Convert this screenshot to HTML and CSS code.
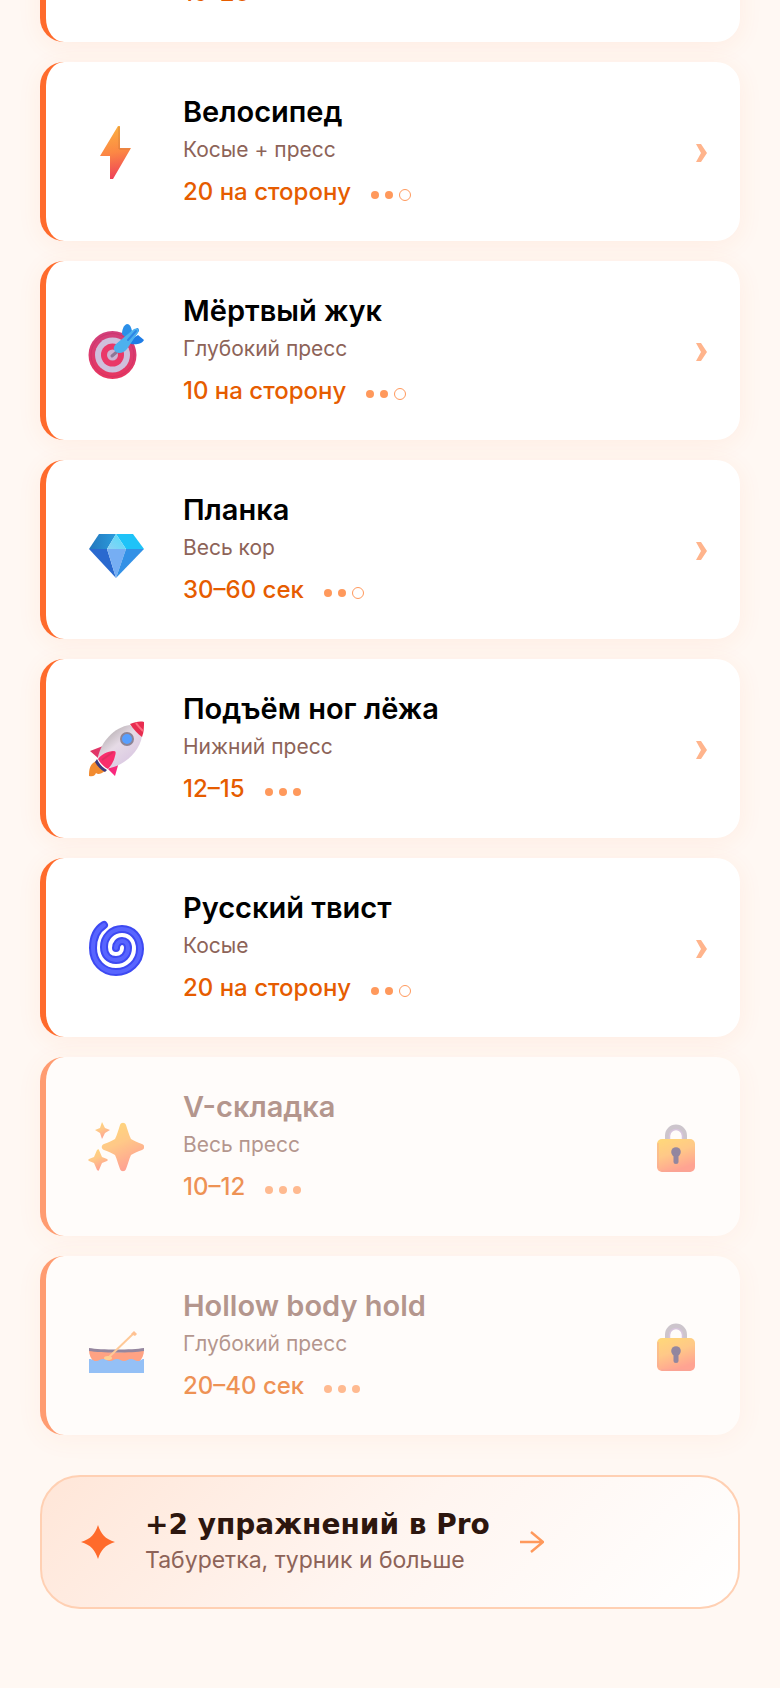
FILE: index.html
```html
<!DOCTYPE html>
<html lang="ru">
<head>
    <meta charset="UTF-8">
    <meta name="viewport" content="width=device-width, initial-scale=1.0">
    <title>Упражнения на пресс</title>
    <link rel="stylesheet" href="styles.css">
</head>
<body>
    <!-- Shared symbols -->
    <svg class="symbols" aria-hidden="true">
        <defs>
            <linearGradient id="gold" x1="0" y1="0" x2="0.4" y2="1">
                <stop offset="0" stop-color="#ffc938"/>
                <stop offset="0.5" stop-color="#ffb04f"/>
                <stop offset="1" stop-color="#ff765f"/>
            </linearGradient>
            <symbol id="chevron" viewBox="0 0 12 20">
                <path d="M0 2h5l6 9-6 9H0l5-9z" fill="#ffb48c"/>
            </symbol>
            <symbol id="lock" viewBox="0 0 64 52">
                <path d="M23.500 20v-5.500a8.500 8.500 0 0 1 17 0V20" fill="none" stroke="#b3abb8" stroke-width="5"/>
                <path d="M25.500 20v-5a6.500 6.500 0 0 1 13 0v5" fill="none" stroke="#c3a9d0" stroke-width="1.500"/>
                <rect x="13" y="18" width="38" height="33" rx="5" fill="url(#gold)"/>
                <path d="M14 22v25M17 50h30" stroke="#f0786a" stroke-width="1" opacity="0.700"/>
                <circle cx="32" cy="31" r="4.800" fill="#5a4a73"/>
                <rect x="29.500" y="31" width="5" height="12" rx="2.500" fill="#5a4a73"/>
            </symbol>
        </defs>
    </svg>

    <main class="page">
        <ul class="exercise-list">
            <li>
                <button class="exercise" type="button">
                    <span class="exercise-icon"></span>
                    <span class="exercise-text">
                        <span class="exercise-meta">15–20</span>
                    </span>
                </button>
            </li>
            <li>
                <button class="exercise" type="button">
                    <span class="exercise-icon">
                        <svg viewBox="0 0 56 56" aria-hidden="true">
                            <linearGradient id="bolt" x1="0.400" y1="0" x2="0.500" y2="1">
                                <stop offset="0" stop-color="#fbb041"/>
                                <stop offset="0.500" stop-color="#fc8744"/>
                                <stop offset="1" stop-color="#ee3f59"/>
                            </linearGradient>
                            <path d="M30 2h2v22h11L25 55h-3V32H12z" fill="url(#bolt)"/>
                            <path d="M31 3v22h11" fill="none" stroke="#c97a3d" stroke-width="1" opacity="0.600"/>
                        </svg>
                    </span>
                    <span class="exercise-text">
                        <span class="exercise-name">Велосипед</span>
                        <span class="exercise-target">Косые + пресс</span>
                        <span class="exercise-meta">20 на сторону <span class="level"><i class="dot"></i><i class="dot"></i><i class="dot empty"></i></span></span>
                    </span>
                    <svg class="chevron" aria-hidden="true"><use href="#chevron"/></svg>
                </button>
            </li>
            <li>
                <button class="exercise" type="button">
                    <span class="exercise-icon">
                        <svg viewBox="0 0 56 56" aria-hidden="true">
                            <linearGradient id="board" x1="0" y1="0" x2="0" y2="1">
                                <stop offset="0" stop-color="#d1417d"/>
                                <stop offset="1" stop-color="#e8365f"/>
                            </linearGradient>
                            <circle cx="24.500" cy="32" r="24" fill="url(#board)"/>
                            <circle cx="24.500" cy="32" r="21.500" fill="none" stroke="#c92f66" stroke-width="1" opacity="0.600"/>
                            <circle cx="24.500" cy="32" r="17.500" fill="#cfbfdc"/>
                            <circle cx="24.500" cy="32" r="11.500" fill="#ea3868"/>
                            <circle cx="24.500" cy="32" r="5.500" fill="#cbb4d2"/>
                            <path d="M24 33l7-6" stroke="#8d7796" stroke-width="3" stroke-linecap="round"/>
                            <path d="M34 11c0-5 2-9 5-10 3 0 4 3 5 7l-5 8z" fill="#2b8fe8"/>
                            <path d="M41 18l9-6 6 5c-2 4-8 5-13 4z" fill="#1f7de6"/>
                            <path d="M44 9l5-4c2 0 2 2 2 3l-4 6z" fill="#2f8fe8"/>
                            <path d="M28 21L46 6c4-2 6 2 3 5L39 26c-3 4-8 5-11 3s-3-5 0-8z" fill="#4db1ee"/>
                            <path d="M40 17l8-9" stroke="#2f86e6" stroke-width="2" stroke-linecap="round"/>
                        </svg>
                    </span>
                    <span class="exercise-text">
                        <span class="exercise-name">Мёртвый жук</span>
                        <span class="exercise-target">Глубокий пресс</span>
                        <span class="exercise-meta">10 на сторону <span class="level"><i class="dot"></i><i class="dot"></i><i class="dot empty"></i></span></span>
                    </span>
                    <svg class="chevron" aria-hidden="true"><use href="#chevron"/></svg>
                </button>
            </li>
            <li>
                <button class="exercise" type="button">
                    <span class="exercise-icon">
                        <svg viewBox="0 0 56 56" aria-hidden="true">
                            <linearGradient id="gem-left" x1="0" y1="0" x2="1" y2="0">
                                <stop offset="0" stop-color="#2377bd"/>
                                <stop offset="1" stop-color="#2b9bdc"/>
                            </linearGradient>
                            <linearGradient id="gem-mid" x1="0" y1="1" x2="1" y2="0">
                                <stop offset="0" stop-color="#8cd2f5"/>
                                <stop offset="1" stop-color="#4fdcf8"/>
                            </linearGradient>
                            <path d="M1 27L11 12h17l-9 15z" fill="url(#gem-left)"/>
                            <path d="M28 12h17l11 15H38z" fill="#1fc3f8"/>
                            <path d="M28 12l10 15H19z" fill="url(#gem-mid)"/>
                            <path d="M1 27h18l9 29z" fill="#2a69cf"/>
                            <path d="M19 27h19L28 56z" fill="#76aef3"/>
                            <path d="M38 27h18L28 56z" fill="#3391e6"/>
                        </svg>
                    </span>
                    <span class="exercise-text">
                        <span class="exercise-name">Планка</span>
                        <span class="exercise-target">Весь кор</span>
                        <span class="exercise-meta">30–60 сек <span class="level"><i class="dot"></i><i class="dot"></i><i class="dot empty"></i></span></span>
                    </span>
                    <svg class="chevron" aria-hidden="true"><use href="#chevron"/></svg>
                </button>
            </li>
            <li>
                <button class="exercise" type="button">
                    <span class="exercise-icon">
                        <svg viewBox="0 0 56 56" aria-hidden="true">
                            <linearGradient id="hull" x1="0.200" y1="0.200" x2="0.700" y2="0.800">
                                <stop offset="0" stop-color="#bdb5b9"/>
                                <stop offset="0.450" stop-color="#e6dbe6"/>
                                <stop offset="1" stop-color="#dccbe3"/>
                            </linearGradient>
                            <linearGradient id="fin" x1="0" y1="0" x2="1" y2="1">
                                <stop offset="0" stop-color="#d93a62"/>
                                <stop offset="1" stop-color="#ff2482"/>
                            </linearGradient>
                            <path d="M8 40c-6 3-7 8-7 15 5 1 6-1 7-3 2 2 5 1 9-2z" fill="#f28b30"/>
                            <path d="M15 25L2 30l8 7zM31 41l-4 14-7-7z" fill="url(#fin)"/>
                            <path d="M10 36C13 21 26 6 42 4l12 11c-2 15-17 29-32 32z" fill="url(#hull)"/>
                            <path d="M42 3c5-2 10-3 14-2 0 5 0 10-2 15-4-3-9-8-12-13z" fill="#e82d50"/>
                            <path d="M48 2c2 3 5 6 7 8" stroke="#ff6b80" stroke-width="2" fill="none"/>
                            <path d="M9 38c2 5 6 9 10 11l-2 2C13 49 9 45 7 41z" fill="#3d3a7d"/>
                            <path d="M10 38c3-4 9-8 16-8 2 0 2 2 1 5-1 5-4 10-7 13-4-2-8-6-10-10z" fill="#f92d6c"/>
                            <path d="M14 39l11-8" stroke="#c73258" stroke-width="2" opacity="0.500"/>
                            <circle cx="39" cy="18" r="6" fill="#579fff" stroke="#8d8495" stroke-width="2"/>
                        </svg>
                    </span>
                    <span class="exercise-text">
                        <span class="exercise-name">Подъём ног лёжа</span>
                        <span class="exercise-target">Нижний пресс</span>
                        <span class="exercise-meta">12–15 <span class="level"><i class="dot"></i><i class="dot"></i><i class="dot"></i></span></span>
                    </span>
                    <svg class="chevron" aria-hidden="true"><use href="#chevron"/></svg>
                </button>
            </li>
            <li>
                <button class="exercise" type="button">
                    <span class="exercise-icon">
                        <svg viewBox="0 0 56 56" aria-hidden="true">
                            <g fill="none" stroke-linecap="round">
                                <path d="M16 5C8 10 5 18 5 28c0 14 10 24 23 24s24-10 24-23c0-12-8-20-18-20s-18 8-18 18c0 8 5 13 12 13s12-5 12-12c0-5-3-7-6-7s-6 3-6 7" stroke="#3d49f2" stroke-width="8"/>
                                <path d="M16 5C8 10 5 18 5 28c0 14 10 24 23 24s24-10 24-23c0-12-8-20-18-20s-18 8-18 18c0 8 5 13 12 13s12-5 12-12c0-5-3-7-6-7s-6 3-6 7" stroke="#5865ff" stroke-width="4"/>
                            </g>
                        </svg>
                    </span>
                    <span class="exercise-text">
                        <span class="exercise-name">Русский твист</span>
                        <span class="exercise-target">Косые</span>
                        <span class="exercise-meta">20 на сторону <span class="level"><i class="dot"></i><i class="dot"></i><i class="dot empty"></i></span></span>
                    </span>
                    <svg class="chevron" aria-hidden="true"><use href="#chevron"/></svg>
                </button>
            </li>
            <li>
                <button class="exercise locked" type="button">
                    <span class="exercise-icon">
                        <svg viewBox="0 0 56 56" aria-hidden="true">
                            <g fill="url(#gold)">
                                <path d="M32 6c1-3 5-3 6 0 2 6 3 10 5 14 3 2 6 3 11 5 3 1 3 5 0 6-5 2-8 3-11 5-2 4-3 9-5 14-1 3-5 3-6 0-2-5-3-10-5-14-3-2-6-3-11-5-3-1-3-5 0-6 5-2 8-3 11-5 2-4 3-8 5-14z"/>
                                <path d="M14 3l3 6 5 2-5 3-3 6-2-6-5-3 5-2z"/>
                                <path d="M9 31c1-1 2-1 2 0l3 7 5 2c1 1 1 1 0 2l-5 2-3 7c0 1-1 1-2 0l-3-7-5-2c-1-1-1-1 0-2l5-2z"/>
                            </g>
                        </svg>
                    </span>
                    <span class="exercise-text">
                        <span class="exercise-name">V-складка</span>
                        <span class="exercise-target">Весь пресс</span>
                        <span class="exercise-meta">10–12 <span class="level"><i class="dot"></i><i class="dot"></i><i class="dot"></i></span></span>
                    </span>
                    <svg class="lock" aria-hidden="true"><use href="#lock"/></svg>
                </button>
            </li>
            <li>
                <button class="exercise locked" type="button">
                    <span class="exercise-icon">
                        <svg viewBox="0 0 56 56" aria-hidden="true">
                            <path d="M1 32c8 3 47 3 55 0 0 5-2 9-5 12H6c-3-3-5-7-5-12z" fill="#ff7548"/>
                            <path d="M1 30c12 2 43 2 55 0v3c-12 2-43 2-55 0z" fill="#5d4a72"/>
                            <path d="M1 41c4 0 4 2 7 2s4-2 7-2 4 2 7 2 4-2 7-2 4 2 7 2 4-2 7-2 4 2 7 2 3-2 6-2v14H1z" fill="#5ba3f8"/>
                            <path d="M20 40l26-25" stroke="#ffb067" stroke-width="2"/>
                            <path d="M43 16l3-3 3 3-2 2z" fill="#ffa45f"/>
                            <ellipse cx="20" cy="40" rx="4" ry="2" fill="#ffbb60"/>
                        </svg>
                    </span>
                    <span class="exercise-text">
                        <span class="exercise-name">Hollow body hold</span>
                        <span class="exercise-target">Глубокий пресс</span>
                        <span class="exercise-meta">20–40 сек <span class="level"><i class="dot"></i><i class="dot"></i><i class="dot"></i></span></span>
                    </span>
                    <svg class="lock" aria-hidden="true"><use href="#lock"/></svg>
                </button>
            </li>
        </ul>

        <button class="pro-banner" type="button">
            <svg class="pro-star" viewBox="0 0 34 34" aria-hidden="true">
                <path d="M17 0c3 9 7 14 17 17-10 3-14 8-17 17C14 25 10 20 0 17 10 14 14 9 17 0z" fill="#ff6b2c"/>
            </svg>
            <span class="pro-text">
                <span class="pro-title">+2 упражнений в Pro</span>
                <span class="pro-subtitle">Табуретка, турник и больше</span>
            </span>
            <svg class="pro-arrow" viewBox="0 0 24 22" aria-hidden="true">
                <path d="M0 11h23M11 1l12 10-12 10" fill="none" stroke="#ff995c" stroke-width="2.400"/>
            </svg>
        </button>
    </main>
</body>
</html>
```
FILE: styles.css
```css
* {
    box-sizing: border-box;
}

body {
    margin: 0;
    background-color: #fff8f3;
    font-family: Inter, 'Noto Sans', sans-serif;
    overflow-x: hidden;
}

button {
    width: 100%;
    font-family: inherit;
    text-align: left;
    cursor: pointer;
}

.symbols {
    display: block;
    width: 0;
    height: 0;
}

.page {
    padding: 0 40px 60px;
    overflow: hidden;
}

/* The list is scrolled so that the first card is almost out of view */
.exercise-list {
    display: flex;
    flex-direction: column;
    gap: 20px;
    list-style: none;
    margin: -66px 0 40px;
    padding: 0;
}

.exercise {
    display: flex;
    align-items: center;
    gap: 29px;
    padding: 32px;
    background-color: white;
    border: none;
    border-left: 6px solid #ff6b2c;
    border-radius: 24px;
    box-shadow: 0 4px 24px rgba(255, 107, 44, 0.08);
}

.exercise-icon {
    display: flex;
    justify-content: center;
    width: 76px;
}

.exercise-icon svg {
    width: 56px;
    height: 56px;
}

.exercise-text {
    display: flex;
    flex: 1;
    flex-direction: column;
}

.exercise-name {
    font-size: 29px;
    font-weight: 600;
    line-height: 36px;
    color: black;
}

.exercise-target {
    margin-top: 5px;
    font-size: 21px;
    line-height: 30px;
    color: #8d6358;
}

.exercise-meta {
    display: flex;
    align-items: center;
    gap: 20px;
    margin-top: 9px;
    font-size: 24px;
    font-weight: 500;
    line-height: 35px;
    color: #e65c00;
}

.level {
    display: flex;
    align-items: center;
    gap: 6px;
    padding-top: 6px;
}

.dot {
    width: 8px;
    height: 8px;
    border-radius: 50%;
    background-color: #ff995c;
}

.dot.empty {
    width: 12px;
    height: 12px;
    background: none;
    border: 1px solid #ff995c;
}

.chevron {
    width: 12px;
    height: 20px;
}

.lock {
    width: 64px;
    height: 52px;
}

/* Locked exercises */
.locked {
    opacity: 0.65;
}

.locked .exercise-name {
    color: #8d6358;
}

/* Pro banner */
.pro-banner {
    display: flex;
    align-items: center;
    gap: 30px;
    padding: 30px 39px;
    background: linear-gradient(135deg, #ffe6d8, #fff5f0 50%, white);
    border: 2px solid #ffd0b3;
    border-radius: 40px;
}

.pro-star {
    width: 34px;
    height: 34px;
}

.pro-text {
    display: flex;
    flex-direction: column;
}

.pro-title {
    font-family: 'DejaVu Sans', sans-serif;
    font-size: 28px;
    font-weight: bold;
    line-height: 36px;
    color: #2d160e;
}

.pro-subtitle {
    font-size: 23px;
    line-height: 34px;
    color: #8d6358;
}

.pro-arrow {
    width: 24px;
    height: 22px;
}
```
